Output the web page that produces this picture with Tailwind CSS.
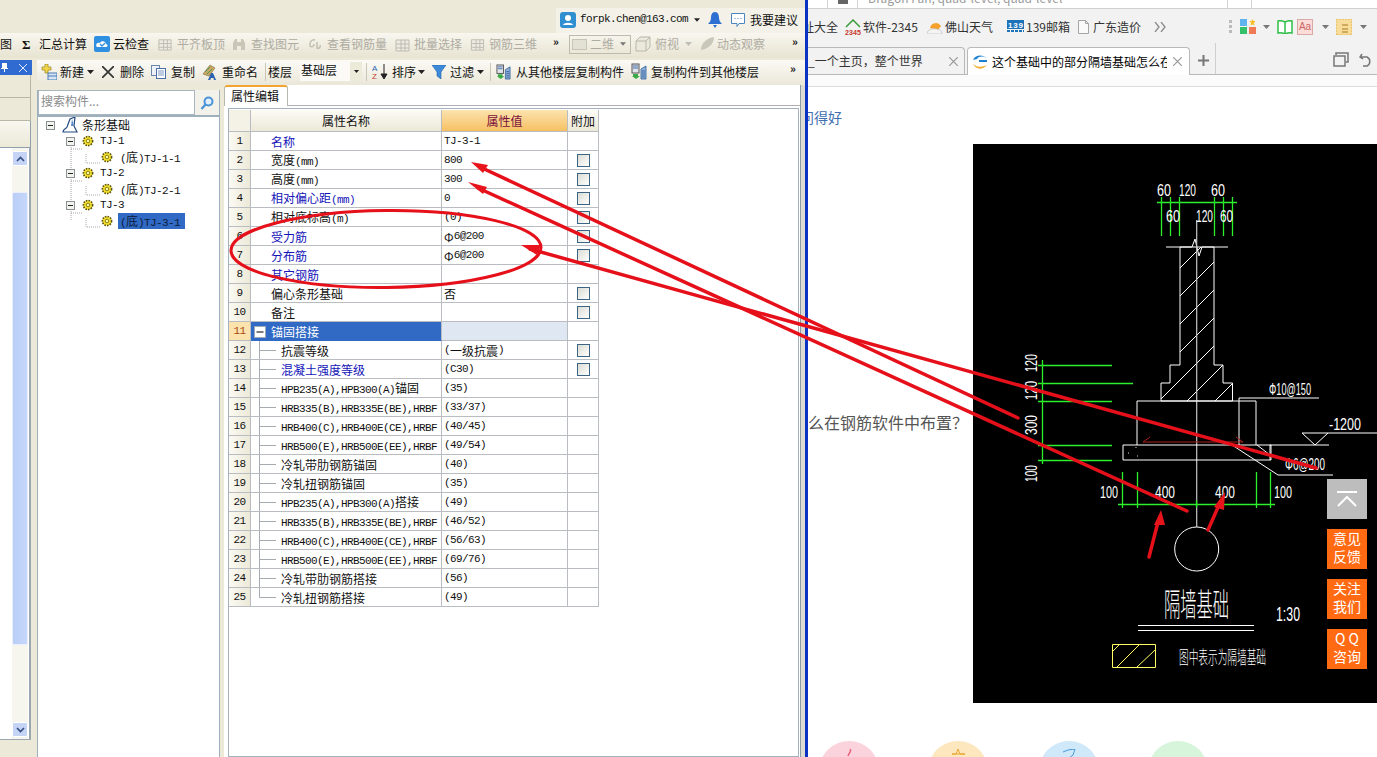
<!DOCTYPE html>
<html lang="zh">
<head>
  <meta charset="UTF-8" />
  <title>属性编辑</title>
  <script src="https://cdn.jsdelivr.net/npm/@tailwindcss/browser@4"></script>
</head>
<body class="bg-white">

<!-- shared icons -->
<svg width="0" height="0" class="absolute">
  <defs>
    <symbol id="gear" viewBox="0 0 12 12">
      <circle cx="6" cy="6" r="4.6" fill="#f6e02a" stroke="#5a5410" stroke-width="1.6" stroke-dasharray="1.6 1.1"/>
      <circle cx="6" cy="6" r="1.8" fill="#fff8a0" stroke="#6b6312" stroke-width=".8"/>
    </symbol>
    <symbol id="minusbox" viewBox="0 0 9 9">
      <rect x=".5" y=".5" width="8" height="8" fill="#f4f4ee" stroke="#8a8f94"/>
      <path d="M2 4.5h5" stroke="#222"/>
    </symbol>
    <symbol id="caret" viewBox="0 0 7 4">
      <path d="M0 0h7L3.5 4z" fill="#222"/>
    </symbol>
    <symbol id="greycaret" viewBox="0 0 7 4">
      <path d="M0 0h7L3.5 4z" fill="#777"/>
    </symbol>
    <symbol id="copyfloor" viewBox="0 0 16 17">
      <rect x="1" y="1" width="7" height="9" fill="#dfe3ea" stroke="#555"/>
      <path d="M2 3h5M2 5h5" stroke="#4a6fb0"/>
      <path d="M2 11h5v2h2l-4 3-4-3h1z" fill="#39a845"/>
      <path d="M10 6l5-3v13h-5zM11 8h3M11 10h3M11 12h3M11 14h3" fill="#8fb0d8" stroke="#2a5a98" stroke-width=".8"/>
    </symbol>
    <symbol id="greyicon" viewBox="0 0 15 17">
      <path d="M1 4h13v11H1zM1 8h13M1 12h13M6 4v11M10 4v11" fill="#eeece2" stroke="#bdbbb0"/>
    </symbol>
    <pattern id="hatch" patternUnits="userSpaceOnUse" width="28" height="28">
      <path d="M-1 21L21 -1M19 29L29 19" stroke="#fff" stroke-width="1"/>
    </pattern>
  </defs>
</svg>

<div class="relative w-[1377px] h-[757px] overflow-hidden flex text-[12px] text-[#111] font-['Noto_Sans_CJK_SC',sans-serif]">

  <!-- desktop application -->
  <div class="w-[805px] shrink-0 flex flex-col bg-[#ece9d8]">

    <!-- title area -->
    <div class="h-[33px] flex justify-end items-end shrink-0">
      <div class="w-[249px] h-[25px] pb-[2px] bg-[#f4f2e8] flex items-center whitespace-nowrap *:shrink-0">
        <svg class="ml-[4px] w-[16px] h-[16px]" viewBox="0 0 16 16"><rect width="16" height="16" rx="3" fill="#2f8fd0"/><circle cx="8" cy="6" r="3" fill="#fff"/><path d="M3 13c1-3 9-3 10 0z" fill="#fff"/></svg>
        <span class="ml-[4px] w-[108px] font-['Liberation_Mono'] text-[11px] tracking-[-0.6px]">forpk.chen@163.com</span>
        <svg class="ml-[6px] w-[6px] h-[4px]"><use href="#caret"/></svg>
        <svg class="ml-[8px] w-[14px] h-[16px]" viewBox="0 0 14 16"><path d="M7 0c3 0 4 3 4 6s2 5 3 6H0c1-1 3-3 3-6s1-6 4-6z" fill="#2d6fd2"/><path d="M5 13h4l-2 3z" fill="#2d6fd2"/></svg>
        <svg class="ml-[8px] w-[16px] h-[16px]" viewBox="0 0 16 16"><path d="M1.5 1.5h13v10H9l-2 3v-3H1.5z" fill="#fff" stroke="#4a86c0"/><path d="M4.5 6.5h1M7.5 6.5h1M10.5 6.5h1" stroke="#4a86c0"/></svg>
        <span class="ml-[4px]">我要建议</span>
      </div>
    </div>

    <!-- toolbar 1 -->
    <div class="h-[25px] pb-[3px] flex items-center shrink-0 whitespace-nowrap bg-linear-to-b from-[#f8f6ef] to-[#e8e4d2] *:shrink-0">
      <span class="w-[12px]">图</span>
      <span class="ml-[10px] w-[9px] font-bold text-[13px] leading-none font-['Liberation_Serif']">Σ</span>
      <span class="ml-[8px] w-[48px]">汇总计算</span>
      <svg class="ml-[7px] w-[16px] h-[16px]" viewBox="0 0 16 16"><rect width="16" height="16" rx="2" fill="#2f8fe0"/><path d="M3 11c-2-2 0-5 3-4 1-3 6-2 6 1 2 0 2 3 0 3z" fill="#fff"/><path d="M6 8l2 2 3-3" stroke="#2f8fe0" fill="none" stroke-width="1.3"/></svg>
      <span class="ml-[3px] w-[36px]">云检查</span>
      <svg class="ml-[9px] w-[14px] h-[16px]"><use href="#greyicon"/></svg>
      <span class="ml-[5px] w-[48px] text-[#aeaca2]">平齐板顶</span>
      <svg class="ml-[7px] w-[14px] h-[14px]" viewBox="0 0 14 14"><path d="M1 13V6l2-4h2v11zM13 13V6l-2-4H9v11zM5 5h4v4H5z" fill="#c9c6b8"/></svg>
      <span class="ml-[5px] w-[48px] text-[#aeaca2]">查找图元</span>
      <svg class="ml-[9px] w-[14px] h-[12px]" viewBox="0 0 14 12"><path d="M7 2C4 1 1 4 2 8c2 2 4 0 4-2M9 4v6c2 1 4-1 3-3" fill="none" stroke="#c2bfb2" stroke-width="1.5"/></svg>
      <span class="ml-[5px] w-[60px] text-[#aeaca2]">查看钢筋量</span>
      <svg class="ml-[8px] w-[15px] h-[17px]"><use href="#greyicon"/></svg>
      <span class="ml-[4px] w-[48px] text-[#aeaca2]">批量选择</span>
      <svg class="ml-[8px] w-[15px] h-[16px]"><use href="#greyicon"/></svg>
      <span class="ml-[4px] w-[48px] text-[#aeaca2]">钢筋三维</span>
      <span class="ml-[16px] w-[10px] -mt-[6px] font-bold text-[11px] leading-none">»</span>
      <div class="ml-[6px] w-[62px] h-[19px] border border-[#bdbbae] flex items-center text-[#aeaca2]">
        <span class="ml-[2px] w-[15px] h-[11px] bg-[#e3e1d4] border border-[#c6c4b6]"></span>
        <span class="ml-[3px]">二维</span>
        <svg class="ml-[6px] w-[6px] h-[4px]"><use href="#greycaret"/></svg>
      </div>
      <svg class="ml-[4px] w-[16px] h-[16px]" viewBox="0 0 16 16"><path d="M1 5l4-4h10v10l-4 4H1zM1 5h10v10M11 5l4-4" fill="#ebe9dc" stroke="#b9b7aa"/></svg>
      <span class="ml-[4px] w-[24px] text-[#aeaca2]">俯视</span>
      <svg class="ml-[6px] w-[7px] h-[4px] opacity-40"><use href="#greycaret"/></svg>
      <svg class="ml-[7px] w-[16px] h-[16px]" viewBox="0 0 16 16"><path d="M2 14C2 7 8 2 15 1c0 7-6 12-13 13z" fill="#c9c7ba"/></svg>
      <span class="ml-[2px] w-[48px] text-[#aeaca2]">动态观察</span>
      <span class="ml-[27px] w-[10px] -mt-[6px] font-bold text-[11px] leading-none">»</span>
    </div>

    <div class="flex flex-1 min-h-0">
      <!-- docked side panel -->
      <div class="w-[37px] shrink-0 pt-[2px] flex flex-col">
        <div class="w-[32px] h-[15px] bg-[#2f6bd0] flex items-center text-white">
          <svg class="ml-[1px] w-[7px] h-[9px]" viewBox="0 0 7 9"><path d="M1 0h5v5h1v1H4v3H3V6H0V5h1z" fill="#fff"/></svg>
          <svg class="ml-[11px] w-[8px] h-[8px]" viewBox="0 0 8 8"><path d="M0 0l8 8M8 0L0 8" stroke="#dfe8fa"/></svg>
        </div>
        <div class="w-[31px] h-[23px] border-b border-r border-[#b9b8a8]"></div>
        <div class="w-[31px] h-[23px] border-b border-r border-[#b9b8a8]"></div>
        <div class="w-[31px] h-[27px] bg-linear-to-b from-[#f8f7f0] to-[#ece9d8] border-r border-b border-[#8fa0ad]"></div>
        <div class="w-[31px] h-[592px] bg-white border-r-2 border-b border-[#9aa7b0]">
          <div class="ml-[12px] w-[16px] h-full bg-[#f6f6ef] flex flex-col pt-[3px]">
            <div class="h-[15px] bg-[#c5d3f5] border border-white rounded-[2px] flex items-center justify-center shrink-0">
              <svg class="w-[9px] h-[6px]" viewBox="0 0 9 6"><path d="M1 5l3.5-3.5L8 5" fill="none" stroke="#344f80" stroke-width="1.7"/></svg>
            </div>
            <div class="mt-[26px] h-[453px] bg-linear-to-r from-[#b9cdf6] to-[#c6d7fa] border border-[#e8eefb] rounded-[2px] shrink-0"></div>
            <div class="mt-[77px] h-[15px] bg-[#c5d3f5] border border-white rounded-[2px] flex items-center justify-center shrink-0">
              <svg class="w-[9px] h-[6px]" viewBox="0 0 9 6"><path d="M1 1l3.5 3.5L8 1" fill="none" stroke="#344f80" stroke-width="1.7"/></svg>
            </div>
          </div>
        </div>
      </div>

      <div class="flex-1 min-w-0 pt-[2px] flex flex-col">
        <!-- toolbar 2 -->
        <div class="h-[24px] pb-[1px] mb-[1px] flex items-center shrink-0 whitespace-nowrap bg-linear-to-b from-[#fbfaf5] to-[#ebe8da] *:shrink-0">
          <svg class="ml-[4px] w-[16px] h-[16px]" viewBox="0 0 16 16"><path d="M4 0h3v3h3v3H7v3H4V6H1V3h3z" fill="#f2d64a" stroke="#9a8420" stroke-width=".7"/><rect x="7" y="9" width="9" height="7" fill="#d5e4f6" stroke="#4a7ab0"/><path d="M7 12h9" stroke="#4a7ab0"/></svg>
          <span class="ml-[3px] w-[24px]">新建</span>
          <svg class="ml-[3px] w-[7px] h-[4px]"><use href="#caret"/></svg>
          <svg class="ml-[8px] w-[12px] h-[12px]" viewBox="0 0 12 12"><path d="M0 0l12 12M12 0L0 12" stroke="#333" stroke-width="1.7"/></svg>
          <span class="ml-[6px] w-[24px]">删除</span>
          <svg class="ml-[7px] w-[15px] h-[14px]" viewBox="0 0 15 14"><rect x=".5" y=".5" width="8" height="10" fill="#eef2f8" stroke="#6a86a8"/><rect x="5.5" y="3.5" width="9" height="10" fill="#fff" stroke="#4a6fa8"/><path d="M7 6h6M7 8h6M7 10h6" stroke="#7a98c0"/></svg>
          <span class="ml-[5px] w-[24px]">复制</span>
          <svg class="ml-[7px] w-[16px] h-[16px]" viewBox="0 0 16 16"><path d="M1 10L8 1l5 3-6 8z" fill="#c9a760" stroke="#7a6a40" stroke-width=".6"/><path d="M3 8l5-5M5 10l5-5" stroke="#4d9a60"/><path d="M6 16l3-7h2l3 7h-2l-.6-2H9l-.8 2z" fill="#2a62b0"/></svg>
          <span class="ml-[4px] w-[36px]">重命名</span>
          <span class="ml-[7px] w-[1px] h-[18px] bg-[#c9c6b5]"></span>
          <span class="ml-[2px] w-[24px]">楼层</span>
          <span class="ml-[8px] w-[50px] h-[19px] -mt-[1px] bg-[#fbfaf6] pl-[1px] leading-[15px]">基础层</span>
          <span class="w-[12px] h-[19px] bg-[#ecead9] flex items-center justify-center"><svg class="w-[5px] h-[3px]"><use href="#caret"/></svg></span>
          <span class="ml-[4px] w-[1px] h-[18px] bg-[#c9c6b5]"></span>
          <svg class="ml-[5px] w-[16px] h-[17px]" viewBox="0 0 16 17"><text x="0" y="7.500" font-size="8" font-family="Liberation Sans" fill="#2a62b0">A</text><text x="0" y="16" font-size="8" font-family="Liberation Sans" fill="#c04030">Z</text><path d="M12 1v13M9 11l3 5 3-5z" stroke="#222" fill="#222"/></svg>
          <span class="ml-[4px] w-[24px]">排序</span>
          <svg class="ml-[2px] w-[7px] h-[4px]"><use href="#caret"/></svg>
          <svg class="ml-[7px] w-[14px] h-[14px]" viewBox="0 0 14 14"><path d="M0 0h14L9 7v7L5 11V7z" fill="#3d8ad8" stroke="#1f5fa8" stroke-width=".6"/></svg>
          <span class="ml-[4px] w-[24px]">过滤</span>
          <svg class="ml-[3px] w-[7px] h-[4px]"><use href="#caret"/></svg>
          <span class="ml-[6px] w-[1px] h-[18px] bg-[#c9c6b5]"></span>
          <svg class="ml-[5px] w-[15px] h-[16px]"><use href="#copyfloor"/></svg>
          <span class="ml-[5px] w-[108px]">从其他楼层复制构件</span>
          <svg class="ml-[7px] w-[16px] h-[17px]"><use href="#copyfloor"/></svg>
          <span class="ml-[4px] w-[108px]">复制构件到其他楼层</span>
          <span class="ml-[31px] w-[10px] -mt-[6px] font-bold text-[11px] leading-none">»</span>
        </div>

        <div class="flex flex-1 min-h-0">
          <!-- component tree -->
          <div class="w-[183px] shrink-0 flex flex-col border-x border-[#9fb0bd] border-t-0">
            <div class="h-[5px] bg-[#ece9d8] -mx-[1px] shrink-0"></div>
            <div class="h-[25px] flex shrink-0 bg-[#f3f2ea]">
              <div class="w-[157px] border border-[#a9b5bf] bg-white px-[2px] text-[#8a8a8a] leading-[20px] text-[12px]">搜索构件...</div>
              <div class="flex-1 flex items-center justify-center">
                <svg class="w-[14px] h-[14px]" viewBox="0 0 14 14"><circle cx="8.500" cy="5.500" r="4" fill="#e3f0fb" stroke="#4a93d8" stroke-width="2"/><path d="M5.500 8.500L1.500 13" stroke="#4a93d8" stroke-width="2.400"/></svg>
              </div>
            </div>
            <div id="tree" class="relative flex-1 bg-white border-t-2 border-[#9fb0bd]"></div>
          </div>

          <div class="w-[4px] shrink-0 bg-[#ece9d8]"></div>

          <!-- property editor -->
          <div class="w-[577px] shrink-0 flex flex-col bg-white border-r border-[#8b9ba5]">
            <div class="h-[21px] flex shrink-0 border-b border-[#b3aeb3]">
              <div class="w-[64px] h-[21px] -mb-[1px] bg-white border-x border-[#b9b8ad] border-t-2 border-t-[#efa434] rounded-t-[3px] pl-[6px] leading-[17px]">属性编辑</div>
            </div>
            <div class="ml-[4px] mt-[2px] w-[571px] flex-1 min-h-0 border border-[#a3b2be] pt-[1px]">
              <div id="grid" class="grid grid-cols-[22px_191px_126px_31px] grid-rows-[22px] auto-rows-[19px] w-[370px]"></div>
            </div>
          </div>

          <div class="flex-1 bg-[#dcdcd2]"></div>
        </div>
      </div>
    </div>
  </div>

  <!-- window edge -->
  <div class="w-[3px] shrink-0 bg-[#0a33c4]"></div>

  <!-- browser window -->
  <div class="relative flex-1 min-w-0 flex flex-col overflow-hidden">
    <div class="h-[9px] shrink-0 flex bg-white border-b border-[#cfcfcf] overflow-hidden">
      <div class="w-[20px] border-r border-[#d5d5d5]"></div>
      <div class="w-[30px] border-r border-[#d5d5d5] flex justify-center"><span class="w-[10px] h-[4px] bg-[#666]"></span></div>
      <div class="w-[369px] -mt-[11px] pl-[10px] text-[#9a9a9a] whitespace-nowrap">Dragon Fan, quad-level, quad-level</div>
      <div class="w-[25px] border-x border-[#d5d5d5]"></div>
    </div>

    <!-- bookmarks -->
    <div class="h-[35px] shrink-0 flex items-center bg-[#f2f2f2] text-[#333] whitespace-nowrap *:shrink-0">
      <span class="-ml-[6px] w-[36px]">址大全</span>
      <svg class="ml-[7px] w-[16px] h-[16px]" viewBox="0 0 16 16"><path d="M1 8l7-7 7 7" fill="none" stroke="#3d9a3d" stroke-width="1.500"/><text x="0" y="15.500" font-size="7" font-weight="700" font-family="Liberation Sans" fill="#c8382c" textLength="16">2345</text></svg>
      <span class="ml-[2px] w-[54px]">软件-2345</span>
      <svg class="ml-[10px] w-[16px] h-[15px]" viewBox="0 0 16 15"><path d="M3 9a6 6 0 0 1 11-2l-3 4z" fill="#f5a32c"/><path d="M0 14c1-5 11-6 15-1v2H0z" fill="#f4f4f4" stroke="#bbb" stroke-width=".7"/></svg>
      <span class="ml-[2px] w-[48px]">佛山天气</span>
      <svg class="ml-[14px] w-[17px] h-[13px]" viewBox="0 0 17 13"><rect width="17" height="9" fill="#1e72b8"/><path d="M0 11h17" stroke="#1e72b8" stroke-dasharray="3 1" stroke-width="2"/><text x="1" y="8" font-size="8" font-weight="700" font-family="Liberation Sans" fill="#fff" textLength="15">139</text></svg>
      <span class="ml-[2px] w-[41px]">139邮箱</span>
      <svg class="ml-[11px] w-[11px] h-[14px]" viewBox="0 0 11 14"><path d="M.5.500h7l3 3v10H.5zM7.500.500v3h3" fill="#fafafa" stroke="#a5a5a5"/></svg>
      <span class="ml-[4px] w-[48px]">广东造价</span>
      <svg class="ml-[13px] w-[12px] h-[10px]" viewBox="0 0 12 10"><path d="M1 0l4 5-4 5M7 0l4 5-4 5" fill="none" stroke="#8a8a8a" stroke-width="1.300"/></svg>
      <span class="ml-[63px] w-[3px] h-[13px] border-l-[3px] border-dotted border-[#bbb]"></span>
      <svg class="ml-[8px] w-[16px] h-[15px]" viewBox="0 0 16 15"><rect width="7" height="7" fill="#5fb4f0"/><rect y="8" width="7" height="7" fill="#35c06a"/><rect x="9" y="8" width="7" height="7" fill="#f07a55"/><path d="M12.500 0l1 2h2l-1.500 2 .5 2.500-2-1-2 1 .5-2.500L9.500 2h2z" fill="#f5c02c"/></svg>
      <svg class="ml-[7px] w-[7px] h-[4px]"><use href="#greycaret"/></svg>
      <svg class="ml-[7px] w-[16px] h-[14px]" viewBox="0 0 16 14"><path d="M1 1c3-1 5 0 7 1 2-1 4-2 7-1v12c-3-1-5 0-7 1-2-1-4-2-7-1zM8 2v12" fill="#fff" stroke="#2fbf4a" stroke-width="1.500"/></svg>
      <span class="ml-[4px] w-[16px] h-[16px] bg-[#fbdcd8] border border-[#d9a9a5] text-[#c66] text-[10px] leading-[14px] text-center font-['Liberation_Sans']">Aa</span>
      <svg class="ml-[9px] w-[7px] h-[4px]"><use href="#greycaret"/></svg>
      <svg class="ml-[7px] w-[16px] h-[16px]" viewBox="0 0 16 16"><rect width="16" height="16" fill="#f7dc9a" stroke="#e0b050" stroke-dasharray="2 1"/><path d="M6 6h6M6 10h6M6 13h6" stroke="#a87820"/></svg>
      <svg class="ml-[8px] w-[7px] h-[4px]"><use href="#greycaret"/></svg>
    </div>

    <!-- tabs -->
    <div class="h-[31px] shrink-0 flex items-end bg-[#f2f2f2] border-b border-[#b9b9b9] whitespace-nowrap">
      <div class="w-[157px] h-[27px] border-r border-t border-[#b9b9b9] rounded-tr-[4px] flex items-center text-[#333] overflow-hidden">
        <span class="w-[140px]">_一个主页，整个世界</span>
        <svg class="ml-[1px] w-[9px] h-[9px]" viewBox="0 0 9 9"><path d="M0 0l9 9M9 0L0 9" stroke="#999" stroke-width="1.200"/></svg>
      </div>
      <div class="ml-[2px] w-[223px] h-[28px] -mb-[1px] bg-white border-x border-t border-[#b9b9b9] rounded-t-[4px] flex items-center">
        <svg class="ml-[4px] w-[16px] h-[14px]" viewBox="0 0 16 14"><path d="M1 5c3-6 10-5 14-2-4-2-8-2-10 1z" fill="#1e80d0"/><path d="M1 9c3 6 10 6 14 1-4 2-8 2-11 1z" fill="#f0b030"/><path d="M7 6h8" stroke="#1e80d0" stroke-width="2"/></svg>
        <span class="ml-[4px] w-[175px] overflow-hidden text-black">这个基础中的部分隔墙基础怎么在</span>
        <svg class="ml-[6px] w-[9px] h-[9px]" viewBox="0 0 9 9"><path d="M0 0l9 9M9 0L0 9" stroke="#999" stroke-width="1.200"/></svg>
      </div>
      <svg class="ml-[8px] mb-[8px] w-[11px] h-[11px]" viewBox="0 0 11 11"><path d="M5.500 0v11M0 5.500h11" stroke="#777" stroke-width="2"/></svg>
      <span class="ml-[6px] w-[1px] h-[31px] bg-[#cfcfcf]"></span>
      <svg class="ml-[117px] mb-[7px] w-[16px] h-[15px]" viewBox="0 0 16 15"><path d="M3 3V1h12v9h-2M1 4h11v10H1z" fill="none" stroke="#777" stroke-width="1.500"/></svg>
      <svg class="ml-[10px] mb-[7px] w-[14px] h-[14px]" viewBox="0 0 14 14"><path d="M3 1L1 4l3 2M1 4h7a5 5 0 0 1 0 9H4" fill="none" stroke="#777" stroke-width="1.500"/></svg>
    </div>
    <div class="h-[12px] shrink-0 bg-[#fbfbfb] border-b border-[#dcdcdc]"></div>

    <!-- page -->
    <div class="flex-1 min-h-0 bg-white">
      <div class="flex">
        <div class="w-[165px] shrink-0 pt-[22px] overflow-hidden whitespace-nowrap">
          <div class="-ml-[8px] h-[16px] text-[14px] leading-[16px] text-[#3f6fb0]">问得好</div>
          <div class="mt-[289px] h-[16px] text-[16px] leading-[16px] text-[#555]">么在钢筋软件中布置<span class="font-['Noto_Sans_CJK_TC']">？</span></div>
        </div>
        <svg class="mt-[57px] w-[404px] h-[559px] shrink-0 bg-black" viewBox="973 144 404 559" font-family="Liberation Sans" fill="none">
          <!-- wall section -->
          <path d="M1180 247H1214V365H1223V383H1232.500V401H1161V383H1170V365H1180Z" fill="url(#hatch)" stroke="#fff"/>
          <path d="M1166 247H1192L1195 239L1199 256L1202 247H1228" stroke="#fff"/>
          <path d="M1196.700 220V527" stroke="#c8c8c8" stroke-width="1.200"/>
          <path d="M1137 445V401H1256V445M1123 445H1271V460H1123Z M1239 445V398H1319" stroke="#fff"/>
          <path d="M1232 445L1278 475H1333M1257 445L1270 455M1270 445V460M1302 433H1377M1302 433L1315 445L1328 433M1270 445H1329" stroke="#fff"/>
          <path d="M1143 442H1243L1236 437M1143 442L1150 437" stroke="#a82020"/>
          <path d="M1128 453h1M1136 447v3M1137 456h1" stroke="#ddd" stroke-dasharray="1 2"/>
          <circle cx="1196.700" cy="549" r="22" stroke="#fff"/>
          <!-- green dimensions -->
          <g stroke="#2cf02c" stroke-width="1.300">
            <path d="M1157 202.500H1237M1161.500 197V236M1170.500 197V236M1179.500 197V236M1214.500 197V236M1223.500 197V236M1232.500 197V236"/>
            <path d="M1042.500 360V464M1038 365.500H1112M1038 383.500H1133M1038 401.500H1112M1038 445.500H1112M1038 460.500H1112"/>
            <path d="M1118 504.500H1275M1122.500 472V508M1137.500 472V508M1256.500 472V508M1270.500 472V508M1196.500 500V508"/>
          </g>
          <!-- dimension text -->
          <g fill="#fff" font-size="17">
            <text x="1157" y="196" textLength="14" lengthAdjust="spacingAndGlyphs">60</text>
            <text x="1179" y="196" textLength="17" lengthAdjust="spacingAndGlyphs">120</text>
            <text x="1211" y="196" textLength="14" lengthAdjust="spacingAndGlyphs">60</text>
            <text x="1166" y="222" textLength="14" lengthAdjust="spacingAndGlyphs">60</text>
            <text x="1196" y="222" textLength="17" lengthAdjust="spacingAndGlyphs">120</text>
            <text x="1220" y="222" textLength="13" lengthAdjust="spacingAndGlyphs">60</text>
            <text x="1100" y="498" textLength="18" lengthAdjust="spacingAndGlyphs">100</text>
            <text x="1155" y="498" textLength="20" lengthAdjust="spacingAndGlyphs">400</text>
            <text x="1215" y="498" textLength="20" lengthAdjust="spacingAndGlyphs">400</text>
            <text x="1274" y="498" textLength="18" lengthAdjust="spacingAndGlyphs">100</text>
            <text x="1269" y="395" font-size="16" textLength="42" lengthAdjust="spacingAndGlyphs">Φ10@150</text>
            <text x="1329" y="430" font-size="16" textLength="32" lengthAdjust="spacingAndGlyphs">-1200</text>
            <text x="1285" y="470" font-size="16" textLength="40" lengthAdjust="spacingAndGlyphs">Φ6@200</text>
            <text x="1276" y="621" font-size="20" textLength="24" lengthAdjust="spacingAndGlyphs">1:30</text>
            <text transform="translate(1037 372) rotate(-90)" textLength="18" lengthAdjust="spacingAndGlyphs">120</text>
            <text transform="translate(1037 400) rotate(-90)" textLength="19" lengthAdjust="spacingAndGlyphs">120</text>
            <text transform="translate(1037 435) rotate(-90)" textLength="20" lengthAdjust="spacingAndGlyphs">300</text>
            <text transform="translate(1037 482) rotate(-90)" textLength="17" lengthAdjust="spacingAndGlyphs">100</text>
            <text x="1164" y="616" font-size="32" font-family="Noto Sans CJK SC" font-weight="300" textLength="65" lengthAdjust="spacingAndGlyphs">隔墙基础</text>
            <text x="1179" y="664" font-size="18" font-family="Noto Sans CJK SC" font-weight="300" textLength="87" lengthAdjust="spacingAndGlyphs">图中表示为隔墙基础</text>
          </g>
          <path d="M1138 625.500H1254M1138 630.500H1254" stroke="#fff"/>
          <path d="M1112.500 644.500H1155.500V667.500H1112.500ZM1113 651L1119 645M1117 667L1139 645M1137 667L1155 650" stroke="#ffff66"/>
        </svg>
      </div>
      <div class="flex mt-[38px] *:shrink-0 *:w-[60px] *:h-[60px] *:rounded-full *:flex *:justify-center *:pt-[8px]">
        <div class="ml-[11px] bg-[#fbd3dc]"><svg class="w-[10px] h-[10px]" viewBox="0 0 10 10"><path d="M6 0c2 2-1 4-2 7" fill="none" stroke="#e8607a" stroke-width="1.500"/></svg></div>
        <div class="ml-[49px] bg-[#fde7bf]"><svg class="w-[14px] h-[10px]" viewBox="0 0 14 10"><path d="M7 0l2 5h5L1 5h4z" fill="none" stroke="#eaa530"/></svg></div>
        <div class="ml-[51px] bg-[#cfe9fb]"><svg class="w-[14px] h-[10px]" viewBox="0 0 14 10"><path d="M1 3l5-2 7-1-2 6-4 3" fill="none" stroke="#4a9ad8"/></svg></div>
        <div class="ml-[49px] bg-[#d6f5da]"></div>
      </div>
    </div>

    <!-- floating side buttons -->
    <div class="absolute left-[519px] top-[479px] w-[40px] flex flex-col gap-[10px] text-white text-[14px] leading-[18px] text-center">
      <div class="h-[40px] bg-[#bdbdbd] flex items-center justify-center">
        <svg class="w-[20px] h-[16px]" viewBox="0 0 20 16"><path d="M0 1h20" stroke="#fff" stroke-width="2"/><path d="M1 15l9-9 9 9" fill="none" stroke="#fff" stroke-width="2"/></svg>
      </div>
      <div class="h-[40px] bg-[#ff6a13]">意见<br>反馈</div>
      <div class="h-[40px] bg-[#ff6a13]">关注<br>我们</div>
      <div class="h-[40px] bg-[#ff6a13]">Q Q<br>咨询</div>
    </div>
  </div>

  <!-- red annotations drawn over the screenshot -->
  <svg class="absolute inset-0 z-10 pointer-events-none" width="1377" height="757" viewBox="0 0 1377 757" fill="none">
    <ellipse cx="386" cy="249" rx="155" ry="38.500" transform="rotate(-.6 386 249)" stroke="#e6101a" stroke-width="3"/>
    <g stroke="#e6101a" stroke-width="3.500" stroke-linecap="round">
      <path d="M480 167L1018 418"/>
      <path d="M478 188L1187 511"/>
      <path d="M530 249L1316 468"/>
      <path d="M1149 557L1158 522"/>
      <path d="M1208 530L1219 505"/>
    </g>
    <g fill="#e8141c">
      <path d="M471 162L488 165L483 173Z"/>
      <path d="M468 182L487 187L483 194Z"/>
      <path d="M521 245L541 245L537 255Z"/>
      <path d="M1161 510L1154 525L1165 525Z"/>
      <path d="M1225 492L1214 507L1224 510Z"/>
    </g>
  </svg>
</div>

<script>
  // latin text runs in the half-width bitmap look of the original app
  function t(s) {
    return s.replace(/[\x00-\x7f]+/g, m => `<span class="font-['Liberation_Mono'] text-[11px] tracking-[-0.6px]">${m}</span>`);
  }

  const treeRows = [
    { text: '条形基础', root: true },
    { text: 'TJ-1' },
    { text: '(底)TJ-1-1', child: true },
    { text: 'TJ-2' },
    { text: '(底)TJ-2-1', child: true },
    { text: 'TJ-3' },
    { text: '(底)TJ-3-1', child: true, selected: true },
  ];

  document.getElementById('tree').innerHTML = `
    <svg class="absolute left-0 top-0" width="180" height="120" fill="none">
      <path d="M33 30V103M33 32H44M33 64H44M33 96H44M48 37V46H62M48 69V78H62M48 101V110H62" stroke="#a8a8a8" stroke-dasharray="1 1"/>
    </svg>` + treeRows.map(r => {
    if (r.root) {
      return `<div class="relative h-[16px] flex items-center">
        <svg class="ml-[8px] w-[9px] h-[9px]"><use href="#minusbox"/></svg>
        <svg class="ml-[7px] w-[16px] h-[16px]" viewBox="0 0 16 16"><path d="M1 15c0-3 3-3 4-5l3-8 5-2-1 9 3 6z" fill="#fff" stroke="#234a80" stroke-width="1.200"/><path d="M10 2l-1 7h3z" fill="#5a8ac8"/></svg>
        <span class="ml-[4px]">${r.text}</span></div>`;
    }
    if (r.child) {
      const sel = r.selected ? 'bg-[#316ac5] text-[#0b1b3a]' : '';
      return `<div class="relative h-[16px] flex items-center">
        <svg class="ml-[63px] w-[12px] h-[12px]"><use href="#gear"/></svg>
        <span class="ml-[5px] pl-[2px] w-[67px] h-[16px] leading-[16px] ${sel}">${t(r.text)}</span></div>`;
    }
    return `<div class="relative h-[16px] flex items-center">
      <svg class="ml-[28px] w-[9px] h-[9px]"><use href="#minusbox"/></svg>
      <svg class="ml-[7px] w-[12px] h-[12px]"><use href="#gear"/></svg>
      <span class="ml-[6px] font-['Liberation_Mono'] text-[11px] tracking-[-0.6px]">${r.text}</span></div>`;
  }).join('');

  // name, value, blue label, checkbox, nested
  const rows = [
    ['名称', 'TJ-3-1', 1, 0, 0],
    ['宽度(mm)', '800', 0, 1, 0],
    ['高度(mm)', '300', 0, 1, 0],
    ['相对偏心距(mm)', '0', 1, 1, 0],
    ['相对底标高(m)', '(0)', 0, 1, 0],
    ['受力筋', 'Φ6@200', 1, 1, 0],
    ['分布筋', 'Φ6@200', 1, 1, 0],
    ['其它钢筋', '', 1, 0, 0],
    ['偏心条形基础', '否', 0, 1, 0],
    ['备注', '', 0, 1, 0],
    ['锚固搭接', '', 0, 0, 2],
    ['抗震等级', '(一级抗震)', 0, 1, 1],
    ['混凝土强度等级', '(C30)', 1, 1, 1],
    ['HPB235(A),HPB300(A)锚固', '(35)', 0, 0, 1],
    ['HRB335(B),HRB335E(BE),HRBF', '(33/37)', 0, 0, 1],
    ['HRB400(C),HRB400E(CE),HRBF', '(40/45)', 0, 0, 1],
    ['HRB500(E),HRB500E(EE),HRBF', '(49/54)', 0, 0, 1],
    ['冷轧带肋钢筋锚固', '(40)', 0, 0, 1],
    ['冷轧扭钢筋锚固', '(35)', 0, 0, 1],
    ['HPB235(A),HPB300(A)搭接', '(49)', 0, 0, 1],
    ['HRB335(B),HRB335E(BE),HRBF', '(46/52)', 0, 0, 1],
    ['HRB400(C),HRB400E(CE),HRBF', '(56/63)', 0, 0, 1],
    ['HRB500(E),HRB500E(EE),HRBF', '(69/76)', 0, 0, 1],
    ['冷轧带肋钢筋搭接', '(56)', 0, 0, 1],
    ['冷轧扭钢筋搭接', '(49)', 0, 0, 1],
  ];

  const cell = 'flex items-center border-r border-b border-[#b9bdc1] whitespace-nowrap overflow-hidden';
  const rowCell = cell + ' pt-[1px]';
  let html = `
    <div class="${cell} bg-[#f4f2e6]"></div>
    <div class="${cell} justify-center bg-linear-to-b from-[#fcfbf5] to-[#ece9d8]">属性名称</div>
    <div class="${cell} justify-center bg-linear-to-b from-[#fce3ae] to-[#f6c061] text-[#7a0f3c]">属性值</div>
    <div class="${cell} justify-center bg-linear-to-b from-[#fcfbf5] to-[#ece9d8]">附加</div>`;

  rows.forEach((r, i) => {
    const [name, value, blue, check, kind] = r;
    const group = kind === 2;
    const last = i === rows.length - 1;
    const idx = group ? 'bg-[#fce3ae] text-[#a8480c]' : 'bg-linear-to-r from-[#fbfaf3] to-[#ece9d8]';
    const color = blue ? 'text-[#1414b8]' : '';
    let nameCell;
    if (group) {
      nameCell = `<div class="${rowCell} bg-[#316ac5] text-white border-b-[#316ac5]">
        <svg class="ml-[3px] w-[12px] h-[12px]" viewBox="0 0 12 12"><rect x=".5" y=".5" width="11" height="11" fill="#fff" stroke="#9ab"/><path d="M2.500 6h7" stroke="#222" stroke-width="1.200"/></svg>
        <span class="ml-[5px]">${name}</span></div>`;
    } else if (kind === 1) {
      nameCell = `<div class="${rowCell} relative ${color}">
        <svg class="absolute left-0 top-0" width="30" height="19" fill="none"><path d="${last ? 'M8.500 0V9.500H25' : 'M8.500 0V19M8.500 9.500H25'}" stroke="#a5abb0"/></svg>
        <span class="ml-[30px]">${t(name)}</span></div>`;
    } else {
      nameCell = `<div class="${rowCell} ${color}"><span class="ml-[20px]">${t(name)}</span></div>`;
    }
    const box = check
      ? '<span class="ml-[1px] w-[13px] h-[13px] border border-[#3c6484] bg-linear-to-br from-[#dcdcd4] to-white"></span>'
      : '';
    html += `
      <div class="${rowCell} justify-center ${idx}"><span class="font-['Liberation_Mono'] text-[11px] tracking-[-0.6px]">${i + 1}</span></div>
      ${nameCell}
      <div class="${rowCell} pl-[2px] ${group ? 'bg-[#dfe7f3]' : ''}">${t(value)}</div>
      <div class="${rowCell} justify-center">${box}</div>`;
  });
  document.getElementById('grid').innerHTML = html;
</script>
</body>
</html>
